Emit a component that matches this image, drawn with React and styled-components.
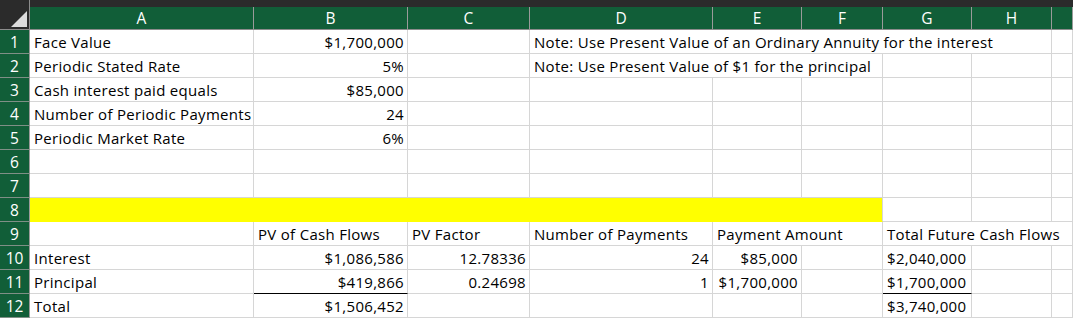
import React from 'react';
import styled, { createGlobalStyle } from 'styled-components';

const GlobalStyle = createGlobalStyle`
    html, body {
        margin: 0;
        padding: 0;
        background: #ffffff;
        overflow: hidden;
    }
`;

const GREEN = '#115e38';
const GRID = '#d6d6d6';

// column widths taken from the screenshot
const COLS = '30px 224px 154px 122px 183px 89px 81px 89px 80px 21px';
const LETTERS = ['A', 'B', 'C', 'D', 'E', 'F', 'G', 'H', ''];

const Sheet = styled.div`
    display: grid;
    grid-template-columns: ${COLS};
    grid-template-rows: 7px 23px repeat(12, 24px);
    width: 1073px;
    font-family: "Open Sans", Lato, sans-serif;
    font-size: 15px;
    letter-spacing: 0.3px;
    color: #000;
`;

const Corner = styled.div`
    grid-row: 1 / span 2;
    grid-column: 1;
    background: #2b2b2b;
    border-right: 1px solid #8c8c8c;
    border-bottom: 1px solid #8c8c8c;
    position: relative;
`;

const TopBar = styled.div`
    grid-row: 1;
    grid-column: 2 / -1;
    background: #2b2b2b;
`;

const ColHead = styled.div`
    background: ${GREEN};
    color: #fff;
    text-align: center;
    line-height: 22px;
    font-size: 15.5px;
    letter-spacing: 0;
    border-right: 1px solid #9a9a9a;
    border-bottom: 1px solid #8c8c8c;
`;

const RowHead = styled.div`
    background: ${GREEN};
    color: #fff;
    text-align: center;
    line-height: 24px;
    font-size: 15.5px;
    letter-spacing: 0;
    border-right: 1px solid #9a9a9a;
    border-bottom: 1px solid #7f8f86;
`;

const Cell = styled.div`
    grid-column: span ${p => p.$span || 1};
    background: ${p => (p.$fill ? '#ffff00' : '#fff')};
    text-align: ${p => p.$align || 'left'};
    padding: 0 ${p => (p.$align === 'right' ? 3 : 4)}px 0 4px;
    line-height: 24px;
    white-space: nowrap;
    overflow: hidden;
    border-right: 1px solid ${GRID};
    border-bottom: 1px solid ${p => (p.$under ? '#000' : p.$fill ? '#ffff00' : GRID)};
`;

const R = 'right';

const rows = [
    [{ t: 'Face Value' }, { t: '$1,700,000', a: R }, {}, { t: 'Note: Use Present Value of an Ordinary Annuity for the interest', s: 5 }, {}],
    [{ t: 'Periodic Stated Rate' }, { t: '5%', a: R }, {}, { t: 'Note: Use Present Value of $1 for the principal', s: 3 }, {}, {}, {}],
    [{ t: 'Cash interest paid equals' }, { t: '$85,000', a: R }, {}, {}, {}, {}, {}, {}, {}],
    [{ t: 'Number of Periodic Payments' }, { t: '24', a: R }, {}, {}, {}, {}, {}, {}, {}],
    [{ t: 'Periodic Market Rate' }, { t: '6%', a: R }, {}, {}, {}, {}, {}, {}, {}],
    [{}, {}, {}, {}, {}, {}, {}, {}, {}],
    [{}, {}, {}, {}, {}, {}, {}, {}, {}],
    [{ s: 6, f: true }, {}, {}, {}],
    [{}, { t: 'PV of Cash Flows' }, { t: 'PV Factor' }, { t: 'Number of Payments' }, { t: 'Payment Amount', s: 2 }, { t: 'Total Future Cash Flows', s: 3 }],
    [{ t: 'Interest' }, { t: '$1,086,586', a: R }, { t: '12.78336', a: R }, { t: '24', a: R }, { t: '$85,000', a: R }, {}, { t: '$2,040,000' }, {}, {}],
    [{ t: 'Principal' }, { t: '$419,866', a: R, u: true }, { t: '0.24698', a: R }, { t: '1', a: R }, { t: '$1,700,000', a: R }, {}, { t: '$1,700,000', u: true }, {}, {}],
    [{ t: 'Total' }, { t: '$1,506,452', a: R }, {}, {}, {}, {}, { t: '$3,740,000' }, {}, {}],
];

export default function App() {
    return (
        <>
            <GlobalStyle />
            <Sheet>
                <Corner>
                    <svg width="30" height="30" style={{ position: 'absolute', left: 0, top: 0 }}>
                        <polygon points="11,27 27,27 27,11" fill="#dcdcdc" />
                    </svg>
                </Corner>
                <TopBar />
                {LETTERS.map((l, i) => (
                    <ColHead key={'h' + i}>{l}</ColHead>
                ))}
                {rows.map((cells, r) => (
                    <React.Fragment key={r}>
                        <RowHead>{r + 1}</RowHead>
                        {cells.map((c, i) => (
                            <Cell key={i} $span={c.s} $align={c.a} $fill={c.f} $under={c.u}>
                                {c.t}
                            </Cell>
                        ))}
                    </React.Fragment>
                ))}
            </Sheet>
        </>
    );
}
